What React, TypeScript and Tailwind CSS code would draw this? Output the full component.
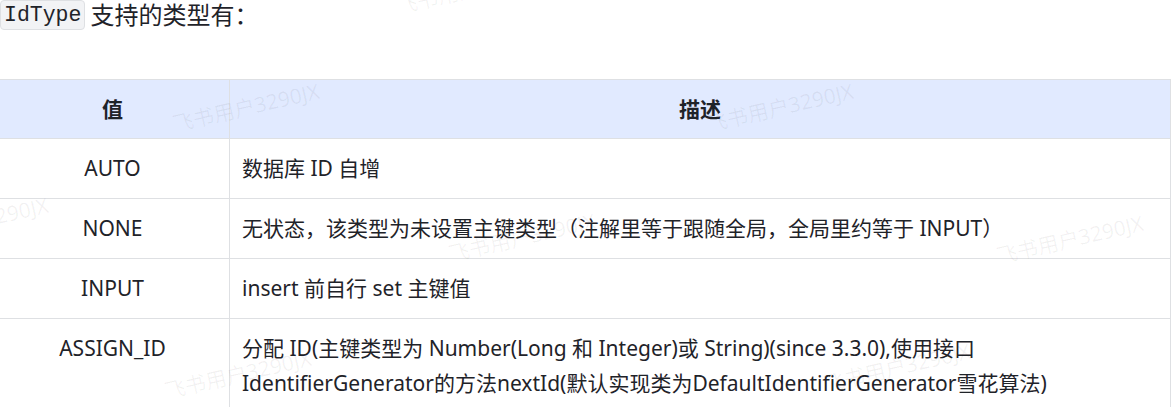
import React from 'react'

const rows = [
  { value: 'AUTO', desc: ['数据库 ID 自增'] },
  { value: 'NONE', desc: ['无状态，该类型为未设置主键类型（注解里等于跟随全局，全局里约等于 INPUT）'] },
  { value: 'INPUT', desc: ['insert 前自行 set 主键值'] },
  {
    value: 'ASSIGN_ID',
    desc: [
      '分配 ID(主键类型为 Number(Long 和 Integer)或 String)(since 3.3.0),使用接口',
      'IdentifierGenerator的方法nextId(默认实现类为DefaultIdentifierGenerator雪花算法)',
    ],
  },
]

// watermark centres, roughly as they fall in the doc view
const marks = [
  { x: 246, y: 108 },
  { x: 780, y: 108 },
  { x: -25, y: 222 },
  { x: 522, y: 238 },
  { x: 1070, y: 240 },
  { x: 238, y: 375 },
  { x: 897, y: 368 },
  { x: 470, y: -10 },
]

export default function App() {
  return (
    <div
      className="relative h-[407px] w-[1175px] overflow-hidden bg-white text-[#1f2329]"
      style={{ fontFamily: '"Noto Sans", "Noto Sans CJK SC", sans-serif' }}
    >
      {/* intro line */}
      <div className="flex h-[30px] items-center">
        <code
          className="rounded-[4px] border border-[#dee0e3] bg-[#f2f3f5] px-[3px] text-[21.5px] font-normal leading-[28px] text-[#1f2329]"
          style={{ fontFamily: '"Liberation Mono", monospace' }}
        >
          IdType
        </code>
        <span className="ml-[5px] text-[24px] leading-[30px]">支持的类型有：</span>
      </div>

      {/* table */}
      <table className="mt-[49px] ml-[-5px] w-[1176px] border-collapse text-[21px] leading-[35px]">
        <colgroup>
          <col className="w-[234px]" />
          <col />
        </colgroup>
        <thead>
          <tr className="bg-[#e1eaff]">
            <th className="h-[59px] border border-[#dee0e3] text-center font-bold">值</th>
            <th className="h-[59px] border border-[#dee0e3] text-center font-bold">描述</th>
          </tr>
        </thead>
        <tbody>
          {rows.map((r) => (
            <tr key={r.value}>
              <td className="border border-[#dee0e3] px-3 py-3 text-center align-top">{r.value}</td>
              <td className="border border-[#dee0e3] px-3 py-3 align-top">
                {r.desc.map((line, i) => (
                  <div key={i}>{line}</div>
                ))}
              </td>
            </tr>
          ))}
        </tbody>
      </table>

      {/* watermark layer */}
      <div className="pointer-events-none absolute inset-0">
        {marks.map((m, i) => (
          <span
            key={i}
            className="absolute -translate-x-1/2 -translate-y-1/2 rotate-[-13deg] whitespace-nowrap text-[21px] text-[rgba(31,35,41,0.06)]"
            style={{ left: m.x, top: m.y }}
          >
            飞书用户3290JX
          </span>
        ))}
      </div>
    </div>
  )
}
